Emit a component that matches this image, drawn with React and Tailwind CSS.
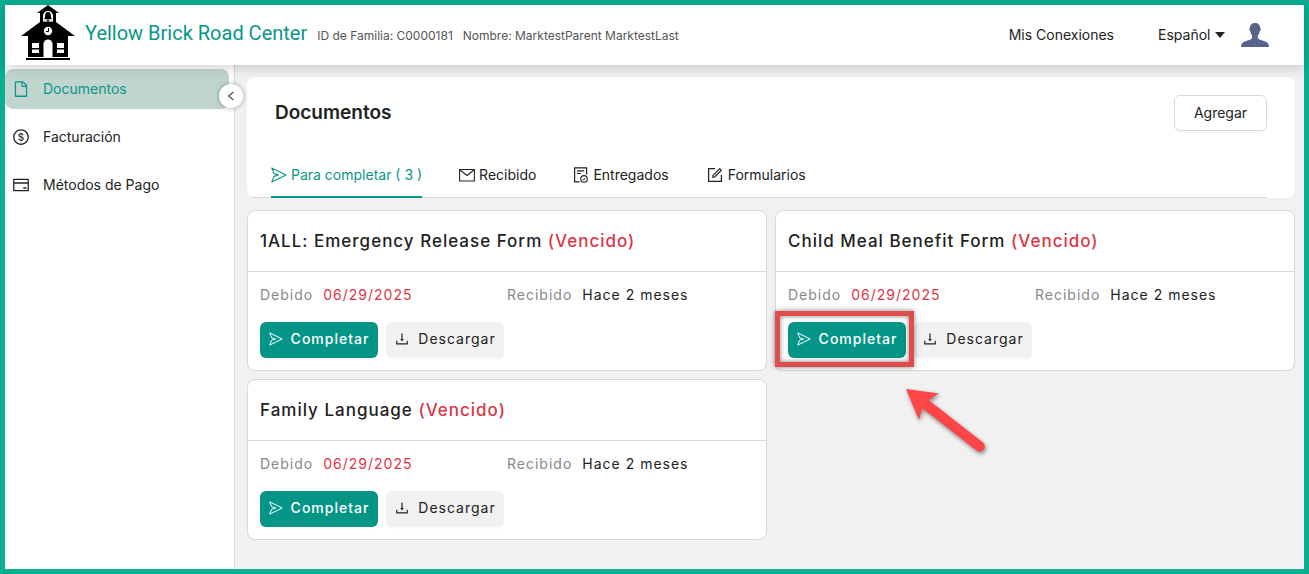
import { useState } from 'react';
import {
  AiOutlineCreditCard,
  AiOutlineDollarCircle,
  AiOutlineDownload,
  AiOutlineFile,
  AiOutlineForm,
  AiOutlineLeft,
} from 'react-icons/ai';

const navItems = [
  { label: 'Documentos', icon: AiOutlineFile },
  { label: 'Facturación', icon: AiOutlineDollarCircle },
  { label: 'Métodos de Pago', icon: AiOutlineCreditCard },
];

const documents = [
  { id: 1, title: '1ALL: Emergency Release Form', due: '06/29/2025', received: 'Hace 2 meses' },
  { id: 2, title: 'Child Meal Benefit Form', due: '06/29/2025', received: 'Hace 2 meses', highlighted: true },
  { id: 3, title: 'Family Language', due: '06/29/2025', received: 'Hace 2 meses' },
];

const SendIcon = ({ className }) => (
  <svg viewBox="0 0 16 16" fill="none" stroke="currentColor" className={className} aria-hidden="true">
    <path d="M.8 1 15 8 .8 15 3 9.400 7.600 8 3 6.600Z" strokeWidth="1.100" strokeLinejoin="round" />
  </svg>
);

const MailIcon = ({ className }) => (
  <svg viewBox="0 0 16 16" fill="none" stroke="currentColor" className={className} aria-hidden="true">
    <path d="M.6 2.500h14.800v11.500H.6zM1 3l7 5.500L15 3" strokeWidth="1.100" />
  </svg>
);

const DeliveredIcon = ({ className }) => (
  <svg viewBox="0 0 16 16" fill="none" stroke="currentColor" className={className} aria-hidden="true">
    <path d="M6.500 14.900H1.600V.9h12v6.600" strokeWidth="1.200" />
    <path d="M4 3.900h7.200M4 6.500h3.800" strokeWidth="1.100" />
    <circle cx="11" cy="11.900" r="3.300" strokeWidth="1.100" />
    <path d="m9.500 12 1.100 1.200 1.900-2.400" strokeWidth="1" />
  </svg>
);

const FormIcon = () => <AiOutlineForm className="size-[18px]" />;

const tabs = [
  { label: 'Para completar ( 3 )', icon: SendIcon },
  { label: 'Recibido', icon: MailIcon },
  { label: 'Entregados', icon: DeliveredIcon },
  { label: 'Formularios', icon: FormIcon },
];

const SchoolLogo = () => (
  <svg viewBox="0 0 54 56" className="mb-1 h-14 w-[54px]" aria-label="Yellow Brick Road Center" role="img">
    {/* bell tower and roofs */}
    <path d="M27 0 38 8H35V17L54 31H47V52H7V31H0L19 17V8H16Z" fill="#000" />
    <path d="M22 16.500V11a5 5 0 0 1 10 0v5.500Z" fill="#fff" />
    <path d="M27 7c-2 0-2.800 1.500-2.800 3.200 0 1.800-.4 3-1.400 4h8.400c-1-1-1.400-2.200-1.400-4C29.800 8.500 29 7 27 7Z" fill="#000" />
    <circle cx="27" cy="15.200" r="1" fill="#000" />
    {/* clock */}
    <circle cx="27" cy="26" r="4.200" fill="#fff" />
    <path d="M27.500 23V26.500H25" fill="none" stroke="#000" strokeWidth="1" />
    {/* door and windows */}
    <path d="M22.500 52V39a4.500 4.500 0 0 1 9 0V52Z" fill="#fff" />
    <path d="M11 38h7v5h-7zM11 44.500h7v3.500h-7zM36 38h7v5h-7zM36 44.500h7v3.500h-7z" fill="#fff" />
    <path d="M5 53h44v2H5z" fill="#000" />
  </svg>
);

const UserIcon = () => (
  <svg viewBox="0 0 28 24" className="h-6 w-7" fill="#56638a" aria-hidden="true">
    <path d="M14 0c3.300 0 5.200 2 5.200 5 .9.300.8 2.300-.4 3.100-.3 1.900-1 3.400-1.900 4.500v2.200c0 1.100 1.200 1.700 3.600 2.500 4.700 1.400 7.500 2.100 7.500 6.700H0c0-4.600 2.800-5.300 7.500-6.700 2.400-.8 3.600-1.400 3.600-2.500v-2.200c-.9-1.100-1.600-2.600-1.900-4.500-1.200-.8-1.300-2.800-.4-3.100 0-3 1.900-5 5.200-5Z" />
  </svg>
);

const Header = () => (
  <header className="relative z-10 flex h-[60px] items-center bg-white pl-4 pr-[35px] shadow-[0_2px_12px_rgba(0,0,0,0.2)]">
    <SchoolLogo />
    <h1 className="mb-1 ml-2.5 font-['Roboto',sans-serif] text-xl text-[#089788]">
      Yellow Brick Road Center
    </h1>
    <div className="ml-2.5 mt-0.5 flex gap-2.5 text-xs text-[#555]">
      <span>ID de Familia: C0000181</span>
      <span>Nombre: MarktestParent MarktestLast</span>
    </div>
    <nav className="ml-auto flex items-center">
      <a href="#conexiones" className="text-sm">Mis Conexiones</a>
      <div className="relative ml-11 mr-4 flex items-center">
        <select
          aria-label="Idioma"
          className="h-8 w-[67px] appearance-none bg-transparent text-sm outline-none"
          defaultValue="es"
        >
          <option value="es">Español</option>
        </select>
        <svg viewBox="0 0 10 6" className="pointer-events-none absolute right-0 h-1.5 w-2.5" fill="#222">
          <path d="M0 0h10L5 6z" />
        </svg>
      </div>
      <button type="button" aria-label="Perfil">
        <UserIcon />
      </button>
    </nav>
  </header>
);

const Sidebar = () => {
  const [active, setActive] = useState('Documentos');

  return (
    <aside className="relative w-[230px] shrink-0 border-r border-[#d9d9d9] bg-white pt-1">
      <nav className="flex flex-col gap-2 pr-[5px]">
        {navItems.map(({ label, icon: Icon }) => (
          <a
            key={label}
            href="#"
            onClick={() => setActive(label)}
            className={
              active === label
                ? 'flex h-10 items-center gap-[13px] rounded-lg bg-[#c1d5cf] pl-[7px] text-sm text-[#089788]'
                : 'flex h-10 items-center gap-[13px] rounded-lg pl-[7px] text-sm text-[#222]'
            }
          >
            <Icon className="size-[18px]" />
            {label}
          </a>
        ))}
      </nav>
      <button
        type="button"
        aria-label="Contraer menú"
        className="absolute -right-[9px] top-[19px] flex size-6 items-center justify-center rounded-full bg-white shadow-[0_0_5px_rgba(0,0,0,0.35)]"
      >
        <AiOutlineLeft className="size-3" />
      </button>
    </aside>
  );
};

// Red box and arrow that point the parent at the button to press
const Callout = () => (
  <div className="pointer-events-none absolute -bottom-[9px] -left-[13px] -right-2 -top-[11px] border-5 border-[#de4c4c] shadow-[0_0_5px_rgba(0,0,0,0.5),inset_0_0_5px_rgba(0,0,0,0.5)]">
    <svg
      viewBox="0 0 90 72"
      className="absolute left-[121px] top-[70px] h-[72px] w-[90px] drop-shadow-[1px_2px_2px_rgba(0,0,0,0.45)]"
    >
      <path
        d="M5 3 38 7.500 27.500 14 82 56.500a5 5 0 0 1-6.500 8L21 22 18 34Z"
        fill="#ff4545"
      />
    </svg>
  </div>
);

const DocumentCard = ({ doc }) => (
  <article className="rounded-lg border border-[#d9d9d9] bg-white tracking-[1px] text-[#222]">
    <h3 className="border-b border-[#d9d9d9] px-3 py-4 text-[17px] leading-7 font-medium">
      {doc.title} <span className="text-[#dc3545]">(Vencido)</span>
    </h3>
    <div className="px-3 pb-3 pt-[13px]">
      <dl className="grid grid-cols-2 text-sm">
        <div className="flex gap-2.5">
          <dt className="text-[#888]">Debido</dt>
          <dd className="text-[#dc3545]">{doc.due}</dd>
        </div>
        <div className="flex gap-2.5">
          <dt className="text-[#888]">Recibido</dt>
          <dd>{doc.received}</dd>
        </div>
      </dl>
      <div className="mt-[17px] flex gap-2 text-sm">
        <div className="relative">
          <button
            type="button"
            className="flex h-9 w-[118px] items-center justify-center gap-2 rounded-md bg-[#049586] pb-0.5 font-medium text-white shadow-[0_2px_0_rgba(0,0,0,0.02)]"
          >
            <SendIcon className="size-3.5" />
            Completar
          </button>
          {doc.highlighted && <Callout />}
        </div>
        <button
          type="button"
          className="flex h-9 w-[118px] items-center justify-center gap-2 rounded-md bg-[#f1f1f1] pb-0.5 shadow-[0_2px_0_rgba(0,0,0,0.02)]"
        >
          <AiOutlineDownload className="size-4" />
          Descargar
        </button>
      </div>
    </div>
  </article>
);

const App = () => {
  const [activeTab, setActiveTab] = useState(0);

  return (
    <div className="flex min-h-screen flex-col border-5 border-[#08af93] bg-[#f1f1f1] font-['Inter',sans-serif] text-[#222]">
      <Header />
      <div className="flex flex-1">
        <Sidebar />
        <main className="min-w-0 flex-1 pb-7 pl-3 pr-[9px] pt-3">
          <section className="rounded-lg bg-white">
            <div className="flex items-center justify-between px-7 pt-[18px]">
              <h2 className="text-[19px] leading-7 font-semibold">Documentos</h2>
              <button
                type="button"
                className="h-9 w-[93px] rounded-md border border-[#d9d9d9] text-sm shadow-[0_2px_0_rgba(0,0,0,0.02)]"
              >
                Agregar
              </button>
            </div>
            <div role="tablist" className="ml-1 mr-7 mt-5 flex gap-[37px] border-b border-[#d9d9d9] pl-5">
              {tabs.map(({ label, icon: Icon }, index) => (
                <button
                  key={label}
                  type="button"
                  role="tab"
                  aria-selected={index === activeTab}
                  onClick={() => setActiveTab(index)}
                  className={
                    index === activeTab
                      ? '-mb-px flex h-[47px] items-center gap-1 border-b-2 border-[#089788] pt-0.5 text-sm text-[#089788]'
                      : '-mb-px flex h-[47px] items-center gap-1 border-b-2 border-transparent pt-0.5 text-sm'
                  }
                >
                  <Icon className="size-4" />
                  {label}
                </button>
              ))}
            </div>
          </section>
          <div className="mt-3 grid grid-cols-2 items-start gap-2">
            {documents.map((doc) => (
              <DocumentCard key={doc.id} doc={doc} />
            ))}
          </div>
        </main>
      </div>
    </div>
  );
};

export default App;
